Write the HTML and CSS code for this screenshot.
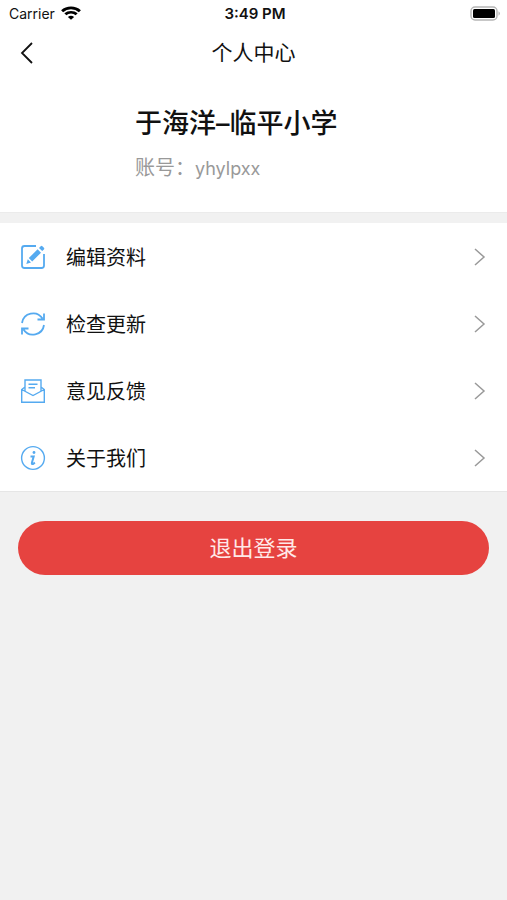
FILE: index.html
```html
<!DOCTYPE html>
<html lang="zh-CN">
  <head>
    <meta charset="UTF-8" />
    <meta name="viewport" content="width=device-width, initial-scale=1.0" />
    <title>个人中心</title>
    <link rel="stylesheet" href="styles.css">
  </head>
  <body>
    <div class="status-bar">
      <div class="carrier">
        <span>Carrier</span>
        <svg width="20" height="14" viewBox="0 0 18 14" preserveAspectRatio="none" fill="none" stroke="#000" stroke-width="2.6">
          <path d="M1 5.2a11.4 11.4 0 0 1 16 0" />
          <path d="M3.9 8.3a7.3 7.3 0 0 1 10.2 0" />
          <path d="M9 13.8L6.2 11a4 4 0 0 1 5.6 0z" fill="#000" stroke="none" />
        </svg>
      </div>
      <span class="time">3:49 PM</span>
      <svg class="battery" width="31" height="15" viewBox="0 0 31 15">
        <rect x="1" y="1" width="26" height="13" rx="4" fill="#fff" stroke="#b5b5b5" stroke-width="1.4" />
        <rect x="3" y="3" width="22" height="9" rx="1.500" fill="#000" />
        <path d="M28.5 5.2a2.6 2.6 0 0 1 0 4.6z" fill="#b5b5b5" />
      </svg>
    </div>

    <header class="nav-bar">
      <button class="back" aria-label="返回">
        <svg width="14" height="22" viewBox="0 0 14 22" fill="none" stroke="#111" stroke-width="1.8">
          <path d="M12 1L2 11l10 10" />
        </svg>
      </button>
      <h1>个人中心</h1>
    </header>

    <section class="profile">
      <h2>于海洋–临平小学</h2>
      <p>账号：<span class="account">yhylpxx</span></p>
    </section>

    <nav class="menu">
      <a href="#edit" class="menu-item">
        <svg class="icon" viewBox="0 0 26 26">
          <path d="M16 2H4.500a2.500 2.500 0 0 0-2.500 2.500v17a2.500 2.500 0 0 0 2.500 2.500h17a2.500 2.500 0 0 0 2.500-2.500V10" />
          <path class="solid" d="M6.300 20l1.500-4.700 3.200 3.200zM8.800 14.100l8.800-8.800 3.400 3.400-8.800 8.800zM19 3.900l1.700-1.700q.8-.8 1.700 0l1.500 1.500q.8.800 0 1.700l-1.700 1.700z" />
        </svg>
        <span>编辑资料</span>
        <svg class="arrow" viewBox="0 0 12 20"><path d="M1 2l9 8-9 8" /></svg>
      </a>
      <a href="#update" class="menu-item">
        <svg class="icon" viewBox="0 0 26 26">
          <path d="M2 12A11.200 11.200 0 0 1 22.500 7.500M24 2.500v6h-6.500M24 14A11.200 11.200 0 0 1 3.500 18.500M2 23.500v-6h6.500" />
        </svg>
        <span>检查更新</span>
        <svg class="arrow" viewBox="0 0 12 20"><path d="M1 2l9 8-9 8" /></svg>
      </a>
      <a href="#feedback" class="menu-item">
        <svg class="icon thin" viewBox="0 0 26 26">
          <path d="M5 9L1.700 11.500v12.800h22.600V11.500L21 9M1.700 11.500L13 17.500l11.300-6M5 13V2h16v11M8.500 6.200h9M8.500 9.800h6.500" />
        </svg>
        <span>意见反馈</span>
        <svg class="arrow" viewBox="0 0 12 20"><path d="M1 2l9 8-9 8" /></svg>
      </a>
      <a href="#about" class="menu-item">
        <svg class="icon thin" viewBox="0 0 26 26">
          <circle cx="13" cy="13" r="11.400" />
          <circle class="solid" cx="14" cy="7.500" r="1.400" />
          <path class="stem" d="M10.500 11.500h3.200l-1.800 6.300q-.3 1.700 1 1.200l2-1.400" />
        </svg>
        <span>关于我们</span>
        <svg class="arrow" viewBox="0 0 12 20"><path d="M1 2l9 8-9 8" /></svg>
      </a>
    </nav>

    <button class="logout">退出登录</button>
  </body>
</html>
```
FILE: styles.css
```css
* {
  box-sizing: border-box;
}
body {
  margin: 0;
  background-color: #f1f1f1;
  color: #111;
  font-family: Inter, "Noto Sans CJK SC", sans-serif;
}
button {
  border: none;
  padding: 0;
  font-family: inherit;
  cursor: pointer;
}
svg {
  display: block;
}
.status-bar {
  display: grid;
  grid-template-columns: 1fr auto 1fr;
  align-items: center;
  height: 26px;
  padding: 0 6px 0 9px;
  background-color: #fff;
  font-size: 14px;
}
.carrier {
  display: flex;
  align-items: center;
  gap: 6px;
}
.time {
  font-size: 15px;
  font-weight: 600;
}
.battery {
  justify-self: end;
}
.nav-bar {
  display: grid;
  grid-template-columns: 54px 1fr 54px;
  align-items: center;
  height: 54px;
  background-color: #fff;
}
.back {
  display: flex;
  justify-content: center;
  background: none;
}
h1 {
  margin: 0;
  padding-bottom: 4px;
  text-align: center;
  font-size: 21px;
  font-weight: 400;
}
.profile {
  height: 133px;
  padding: 25px 20px 0 135px;
  background-color: #fff;
  border-bottom: 1px solid #ebebeb;
}
h2 {
  margin: 0 0 10px;
  font-size: 27px;
  line-height: 38px;
  font-weight: 500;
}
.profile p {
  margin: 0;
  font-size: 20px;
  line-height: 30px;
  color: #999;
}
.account {
  font-size: 18px;
}
.menu {
  margin-top: 10px;
  background-color: #fff;
  border-bottom: 1px solid #e6e6e6;
}
.menu-item {
  display: flex;
  align-items: center;
  gap: 20px;
  height: 67px;
  padding: 0 21px 0 20px;
  color: #111;
  font-size: 20px;
  text-decoration: none;
}
.icon {
  width: 26px;
  height: 26px;
  fill: none;
  stroke: #55aaf0;
  stroke-width: 1.8;
}
.thin {
  stroke-width: 1.4;
}
.stem {
  stroke-width: 2;
}
.solid {
  fill: #55aaf0;
  stroke: none;
}
.arrow {
  width: 12px;
  height: 20px;
  margin-left: auto;
  fill: none;
  stroke: #999;
  stroke-width: 1.5;
}
.logout {
  display: block;
  width: calc(100% - 36px);
  height: 54px;
  margin: 29px 18px;
  padding-bottom: 4px;
  border-radius: 27px;
  background-color: #e64340;
  color: #ffe9e8;
  font-size: 22px;
}
```
